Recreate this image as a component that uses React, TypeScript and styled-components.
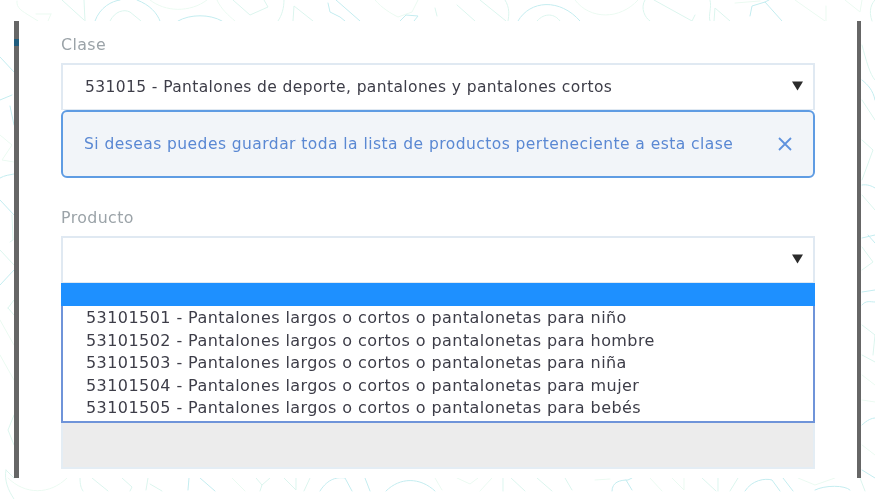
import React from "react";
import styled, { createGlobalStyle } from "styled-components";

const Global = createGlobalStyle`
  html, body { margin: 0; padding: 0; background: #fff; }
  * { box-sizing: border-box; }
  body { font-family: "DejaVu Sans", "Liberation Sans", sans-serif; }
`;

const Page = styled.div`
  position: relative;
  width: 875px;
  height: 499px;
  overflow: hidden;
  padding: 21px 14px 21px 14px;
  background: #fff;
`;

const Doodles = styled.svg`
  position: absolute;
  inset: 0;
  width: 875px;
  height: 499px;
  fill: none;
  stroke-width: 1;
  stroke-linecap: round;
  opacity: 0.8;
`;

const Modal = styled.main`
  position: relative;
  height: 457px;
  background: #fff;
  border-left: 5px solid #666;
  border-right: 4px solid #666;
  padding: 14px 42px 0;
  display: flex;
  flex-direction: column;
`;

const BarMark = styled.span`
  position: absolute;
  left: -5px;
  top: 18px;
  width: 5px;
  height: 7px;
  background: #1f5c7d;
`;

const Field = styled.section`
  display: flex;
  flex-direction: column;
`;

const Label = styled.label`
  height: 28px;
  font-size: 15.8px;
  letter-spacing: 0.4px;
  line-height: 20px;
  color: #9ba3a8;
  filter: blur(0.3px);
`;

const SelectBox = styled.div`
  height: 47px;
  border: 2px solid #e0e9f2;
  border-bottom-width: 1px;
  padding: 0 10px 0 22px;
  display: flex;
  align-items: center;
  justify-content: space-between;
  background: #fff;
`;

const SelectText = styled.span`
  font-size: 15.5px;
  letter-spacing: 0.39px;
  color: #3d3d48;
  filter: blur(0.3px);
`;

const Caret = styled.svg`
  width: 11px;
  height: 10px;
  margin-top: -3px;
  fill: #2b2b2b;
`;

const Alert = styled.div`
  height: 68px;
  border: 2px solid #5f9ce3;
  border-radius: 6px;
  background: #f2f5f9;
  padding: 0 21px 0 21px;
  display: flex;
  align-items: center;
  justify-content: space-between;
  margin-bottom: 30px;
`;

const AlertText = styled.span`
  font-size: 15.5px;
  letter-spacing: 0.45px;
  margin-top: -1px;
  color: #5a88d3;
  filter: blur(0.3px);
`;

const CloseIcon = styled.svg`
  width: 14px;
  height: 14px;
  stroke: #5f92de;
  stroke-width: 1.8;
  fill: none;
`;

const OptionList = styled.ul`
  list-style: none;
  margin: 0;
  padding: 0;
  height: 140px;
  border: 2px solid #6f94d9;
  border-top: 0;
  background: #fff;
`;

const OptionItem = styled.li<{ $active?: boolean }>`
  height: ${(p) => (p.$active ? "23px" : "22.6px")};
  padding-left: 23px;
  font-size: 16px;
  letter-spacing: 0.43px;
  line-height: 22.6px;
  color: #3d3d48;
  background: ${(p) => (p.$active ? "#1e90ff" : "transparent")};
  margin: ${(p) => (p.$active ? "0 -2px 1px" : "0")};
`;

const OptionLabel = styled.span`
  filter: blur(0.3px);
  display: inline-block;
`;

const Disabled = styled.div`
  height: 46px;
  background: #ececec;
  border: 2px solid #e4edf4;
  border-top: 0;
`;

const green = "#e6f9ee";
const mint = "#d3f3ea";
const teal = "#b5e8ec";

const strokes: [string, string][] = [
  [green, "M17 1C16 8 22 11 30 16L38 21M51 14L48 21M36 14L51 14"],
  [mint, "M62 0L84 20M84 0L85 21"],
  [teal, "M95 21C100 7 112 1 120 0M137 0C150 5 157 13 160 21"],
  [mint, "M110 21C115 11 124 9 130 12L141 21"],
  [teal, "M178 21C190 14 210 14 222 21"],
  [green, "M150 0C165 12 190 13 207 0M217 0C221 9 228 15 235 21"],
  [mint, "M233 0L250 15L268 7L264 0M284 0C284 8 282 15 278 21"],
  [mint, "M293 21L294 6L313 21"],
  [teal, "M328 3L330 12L340 17L345 21M336 0L360 21"],
  [green, "M375 0C382 8 390 13 398 17L412 12L418 0"],
  [teal, "M400 21L406 15L418 16L414 21"],
  [mint, "M435 8L437 16M457 5L475 21M480 0L506 21M505 0C510 8 509 15 508 21"],
  [teal, "M518 21C530 0 560 -2 580 21"],
  [mint, "M537 21C545 12 555 14 560 21"],
  [green, "M575 0C590 20 620 20 638 0"],
  [mint, "M645 0C640 8 645 18 650 21M654 0L692 21L695 15"],
  [mint, "M710 0C712 8 708 15 710 21M714 21L715 8L730 21"],
  [green, "M735 3L760 1"],
  [teal, "M750 16L752 6L765 2L782 21M765 2L769 0"],
  [green, "M795 0L825 21M826 6L826 21M845 0L860 12L862 0"],
  [mint, "M872 21C868 10 872 3 875 0"],
  [teal, "M0 57L14 72M0 100L12 95M10 106L14 125"],
  [green, "M0 135L12 145L2 160L14 162"],
  [teal, "M0 178C5 175 10 175 14 174M0 200L14 215"],
  [mint, "M12 215L13 240L10 242M0 250L14 265"],
  [teal, "M0 285L14 270"],
  [mint, "M8 308L14 300M8 308L14 315"],
  [green, "M0 320L14 345M0 355L14 380"],
  [mint, "M14 415L8 430L14 445"],
  [mint, "M6 470L14 478M6 470C4 480 8 490 14 499"],
  [teal, "M862 80C868 85 873 90 875 100"],
  [mint, "M862 45C866 60 870 75 875 80M862 100L875 120"],
  [mint, "M862 140L873 150L862 180"],
  [teal, "M862 185C867 184 872 186 875 188"],
  [mint, "M862 195L875 210"],
  [teal, "M862 238L875 235M868 235L875 243"],
  [mint, "M862 247L873 262L862 270"],
  [teal, "M862 292L875 290M862 305C866 300 870 302 875 302"],
  [mint, "M862 325L875 335L873 355M862 355L875 362"],
  [green, "M862 375L875 385M862 400L875 402"],
  [teal, "M862 425C867 420 872 418 875 418"],
  [green, "M862 445L875 455"],
  [teal, "M862 470L875 478"],
  [green, "M8 478C25 495 50 495 67 478"],
  [mint, "M80 478C80 485 81 488 83 491M92 478L108 491M122 478L132 487L130 491"],
  [mint, "M148 478L146 490M150 484L162 491"],
  [teal, "M189 478L188 490M200 478L215 491"],
  [green, "M232 478L245 491"],
  [mint, "M256 478L262 485L260 491M262 485L270 478M284 478L296 490L296 478M310 478L304 491"],
  [teal, "M320 491C328 478 338 477 345 478L352 491M365 478L370 491"],
  [teal, "M386 491C400 477 420 477 435 491"],
  [green, "M435 478L442 490M457 478L470 484L478 478M480 491L492 478"],
  [mint, "M503 478L503 491M511 478L525 491M537 478L552 491M565 478L572 490"],
  [green, "M595 480L610 479"],
  [teal, "M612 491C612 482 620 480 628 480L632 478M626 480L632 490"],
  [green, "M650 478L662 491M672 478L684 490L684 478"],
  [mint, "M702 478L716 491M718 478L718 491M738 478L730 491"],
  [teal, "M745 491C752 480 765 478 772 480L780 491M783 478L793 491"],
  [green, "M798 478L815 485L835 478"],
  [teal, "M815 490C825 485 845 485 850 490"],
  [mint, "M860 478L865 491"],
];

export default function App() {
  return (
    <Page>
      <Global />
      <Doodles viewBox="0 0 875 499" aria-hidden="true">
        {strokes.map(([color, d], i) => (
          <path key={i} d={d} stroke={color} />
        ))}
      </Doodles>
      <Modal>
        <BarMark />
        <Field>
          <Label>Clase</Label>
          <SelectBox>
            <SelectText>531015 - Pantalones de deporte, pantalones y pantalones cortos</SelectText>
            <Caret viewBox="0 0 12 10"><path d="M0 0H12L6 10Z" /></Caret>
          </SelectBox>
          <Alert>
            <AlertText>Si deseas puedes guardar toda la lista de productos perteneciente a esta clase</AlertText>
            <CloseIcon viewBox="0 0 14 14"><path d="M1 1L13 13M13 1L1 13" /></CloseIcon>
          </Alert>
        </Field>
        <Field>
          <Label>Producto</Label>
          <SelectBox>
            <span />
            <Caret viewBox="0 0 12 10"><path d="M0 0H12L6 10Z" /></Caret>
          </SelectBox>
          <OptionList>
            <OptionItem $active />
            <OptionItem><OptionLabel>53101501 - Pantalones largos o cortos o pantalonetas para niño</OptionLabel></OptionItem>
            <OptionItem><OptionLabel>53101502 - Pantalones largos o cortos o pantalonetas para hombre</OptionLabel></OptionItem>
            <OptionItem><OptionLabel>53101503 - Pantalones largos o cortos o pantalonetas para niña</OptionLabel></OptionItem>
            <OptionItem><OptionLabel>53101504 - Pantalones largos o cortos o pantalonetas para mujer</OptionLabel></OptionItem>
            <OptionItem><OptionLabel>53101505 - Pantalones largos o cortos o pantalonetas para bebés</OptionLabel></OptionItem>
          </OptionList>
          <Disabled />
        </Field>
      </Modal>
    </Page>
  );
}
